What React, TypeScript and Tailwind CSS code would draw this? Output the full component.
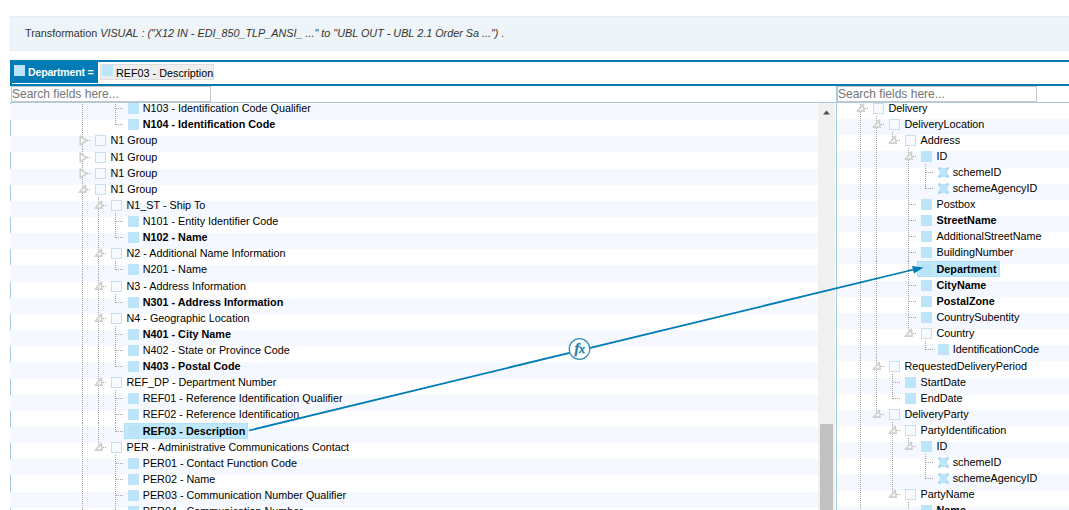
import React from "react";

type Kind = "box" | "leaf" | "attr";
type Joint = "closed" | "open" | "openLast" | "tee" | "end";

interface Row {
  text: string;
  level: number;
  kind: Kind;
  joint: Joint;
  guides?: number[];
  bold?: boolean;
  gap?: boolean;
  selected?: boolean;
}

const sourceRows: Row[] = [
  { text: "N103 - Identification Code Qualifier", level: 2, kind: "leaf", joint: "tee", guides: [0] },
  { text: "N104 - Identification Code", level: 2, kind: "leaf", joint: "end", guides: [0], bold: true },
  { text: "N1 Group", level: 0, kind: "box", joint: "closed" },
  { text: "N1 Group", level: 0, kind: "box", joint: "closed", gap: true },
  { text: "N1 Group", level: 0, kind: "box", joint: "closed" },
  { text: "N1 Group", level: 0, kind: "box", joint: "open" },
  { text: "N1_ST - Ship To", level: 1, kind: "box", joint: "open", guides: [0] },
  { text: "N101 - Entity Identifier Code", level: 2, kind: "leaf", joint: "tee", guides: [0, 1] },
  { text: "N102 - Name", level: 2, kind: "leaf", joint: "end", guides: [0, 1], bold: true },
  { text: "N2 - Additional Name Information", level: 1, kind: "box", joint: "open", guides: [0] },
  { text: "N201 - Name", level: 2, kind: "leaf", joint: "end", guides: [0, 1] },
  { text: "N3 - Address Information", level: 1, kind: "box", joint: "open", guides: [0], gap: true },
  { text: "N301 - Address Information", level: 2, kind: "leaf", joint: "end", guides: [0, 1], bold: true },
  { text: "N4 - Geographic Location", level: 1, kind: "box", joint: "open", guides: [0] },
  { text: "N401 - City Name", level: 2, kind: "leaf", joint: "tee", guides: [0, 1], bold: true },
  { text: "N402 - State or Province Code", level: 2, kind: "leaf", joint: "tee", guides: [0, 1] },
  { text: "N403 - Postal Code", level: 2, kind: "leaf", joint: "end", guides: [0, 1], bold: true },
  { text: "REF_DP - Department Number", level: 1, kind: "box", joint: "open", guides: [0] },
  { text: "REF01 - Reference Identification Qualifier", level: 2, kind: "leaf", joint: "tee", guides: [0, 1] },
  { text: "REF02 - Reference Identification", level: 2, kind: "leaf", joint: "tee", guides: [0, 1] },
  { text: "REF03 - Description", level: 2, kind: "leaf", joint: "end", guides: [0, 1], bold: true, gap: true, selected: true },
  { text: "PER - Administrative Communications Contact", level: 1, kind: "box", joint: "openLast", guides: [0] },
  { text: "PER01 - Contact Function Code", level: 2, kind: "leaf", joint: "tee", guides: [0] },
  { text: "PER02 - Name", level: 2, kind: "leaf", joint: "tee", guides: [0] },
  { text: "PER03 - Communication Number Qualifier", level: 2, kind: "leaf", joint: "tee", guides: [0] },
  { text: "PER04 - Communication Number", level: 2, kind: "leaf", joint: "tee", guides: [0] },
];

const targetRows: Row[] = [
  { text: "Delivery", level: 0, kind: "box", joint: "open" },
  { text: "DeliveryLocation", level: 1, kind: "box", joint: "open", guides: [0] },
  { text: "Address", level: 2, kind: "box", joint: "openLast", guides: [0, 1] },
  { text: "ID", level: 3, kind: "leaf", joint: "open", guides: [0, 1] },
  { text: "schemeID", level: 4, kind: "attr", joint: "tee", guides: [0, 1, 3] },
  { text: "schemeAgencyID", level: 4, kind: "attr", joint: "end", guides: [0, 1, 3] },
  { text: "Postbox", level: 3, kind: "leaf", joint: "tee", guides: [0, 1] },
  { text: "StreetName", level: 3, kind: "leaf", joint: "tee", guides: [0, 1], bold: true },
  { text: "AdditionalStreetName", level: 3, kind: "leaf", joint: "tee", guides: [0, 1] },
  { text: "BuildingNumber", level: 3, kind: "leaf", joint: "tee", guides: [0, 1] },
  { text: "Department", level: 3, kind: "leaf", joint: "tee", guides: [0, 1], bold: true, gap: true, selected: true },
  { text: "CityName", level: 3, kind: "leaf", joint: "tee", guides: [0, 1], bold: true },
  { text: "PostalZone", level: 3, kind: "leaf", joint: "tee", guides: [0, 1], bold: true },
  { text: "CountrySubentity", level: 3, kind: "leaf", joint: "tee", guides: [0, 1] },
  { text: "Country", level: 3, kind: "box", joint: "openLast", guides: [0, 1] },
  { text: "IdentificationCode", level: 4, kind: "leaf", joint: "end", guides: [0, 1] },
  { text: "RequestedDeliveryPeriod", level: 1, kind: "box", joint: "open", guides: [0], gap: true },
  { text: "StartDate", level: 2, kind: "leaf", joint: "tee", guides: [0, 1] },
  { text: "EndDate", level: 2, kind: "leaf", joint: "end", guides: [0, 1] },
  { text: "DeliveryParty", level: 1, kind: "box", joint: "openLast", guides: [0] },
  { text: "PartyIdentification", level: 2, kind: "box", joint: "open", guides: [0] },
  { text: "ID", level: 3, kind: "leaf", joint: "openLast", guides: [0, 2] },
  { text: "schemeID", level: 4, kind: "attr", joint: "tee", guides: [0, 2] },
  { text: "schemeAgencyID", level: 4, kind: "attr", joint: "end", guides: [0, 2] },
  { text: "PartyName", level: 2, kind: "box", joint: "openLast", guides: [0] },
  { text: "Name", level: 3, kind: "leaf", joint: "tee", guides: [0], bold: true },
];

function Guide({ y2 = 17 }: { y2?: number }) {
  return <path d={`M3.5 0V${y2}`} stroke="#a3a3a3" strokeDasharray="1 1" />;
}

function Cell({ joint, guide }: { joint?: Joint; guide?: boolean }) {
  return (
    <svg className="h-[17px] w-4 shrink-0 overflow-visible" viewBox="0 0 16 17" fill="none">
      {guide && <Guide />}
      {joint && (
        <>
          <Guide y2={joint === "end" || joint === "openLast" ? 9 : 17} />
          <path d="M4 8.5H11" stroke="#a3a3a3" strokeDasharray="1 1" />
        </>
      )}
      {joint === "closed" && (
        <path d="M1.2 4V13L7.5 8.5Z" fill="#fafafa" stroke="#d0d0d0" strokeWidth="1.6" strokeLinejoin="round" />
      )}
      {(joint === "open" || joint === "openLast") && (
        <path d="M0.3 11.2L6.2 4.2L7.2 11.2Z" fill="#f6f6f6" stroke="#d0d0d0" strokeWidth="1.7" strokeLinejoin="round" />
      )}
    </svg>
  );
}

function Marker({ kind, selected }: { kind: Kind; selected?: boolean }) {
  if (kind === "box") return <span className="size-[11px] shrink-0 border border-[#c9dfee] bg-[#f7fbff]" />;
  if (kind === "attr")
    return (
      <svg className="size-[11px] shrink-0" viewBox="0 0 11 11" fill="#bde5f9">
        <path d="M1 1H10L9.4 5.5L10 10H1L1.6 5.5Z" />
        <g fill="#a9d9f0">
          <circle cx="1.6" cy="1.6" r="1.6" />
          <circle cx="9.4" cy="1.6" r="1.6" />
          <circle cx="1.6" cy="9.4" r="1.6" />
          <circle cx="9.4" cy="9.4" r="1.6" />
        </g>
      </svg>
    );
  return <span className={`size-[11px] shrink-0 ${selected ? "bg-[#bae3f8]" : "bg-[#bde5f9]"}`} />;
}

function TreeRow({ row, deepLevel }: { row: Row; deepLevel: number }) {
  const cells = Array.from({ length: row.level + 1 }, (_, i) => i);
  return (
    <div className={`flex h-4 shrink-0 items-start ${row.gap ? "mt-px" : ""}`}>
      {cells.map((i) => (
        <span key={i} className={`flex shrink-0 ${i === deepLevel ? "pl-px" : ""}`}>
          <Cell guide={row.guides?.includes(i)} joint={i === row.level ? row.joint : undefined} />
        </span>
      ))}
      <span
        className={`-ml-1 flex h-4 items-center whitespace-nowrap pr-[3px] pl-1 ${
          row.selected ? "bg-[#bee8fe] outline outline-1 -outline-offset-1 outline-[#b2e0f7]" : ""
        }`}
      >
        <Marker kind={row.kind} selected={row.selected} />
        <span
          className={`leading-4 ${row.level === deepLevel ? "pl-[3.7px]" : "pl-[4.5px]"} ${row.bold ? "font-bold" : ""}`}
        >
          {row.text}
        </span>
      </span>
    </div>
  );
}

function SearchBox() {
  return (
    <input
      placeholder="Search fields here..."
      className="block h-4 w-[200px] border border-[#c6c6c6] bg-white px-0 text-[12px] leading-none outline-none placeholder:text-[#757575]"
    />
  );
}

export default function App() {
  return (
    <div className="relative flex h-[510px] w-[1069px] flex-col overflow-hidden bg-white pl-[10px] font-['Liberation_Sans',Arial,sans-serif] text-[10.8px] text-black">
      <div className="mt-4 flex h-[35px] shrink-0 items-center border border-r-0 border-[#e0eef8] bg-[#edf5f9] pl-[14px] text-[#333]">
        <span>
          Transformation <i>VISUAL : ("X12 IN - EDI_850_TLP_ANSI_ ..." to "UBL OUT - UBL 2.1 Order Sa ...") .</i>
        </span>
      </div>

      <div className="mt-[9px] flex h-[26px] shrink-0 items-start border-y-2 border-l-2 border-[#007bb5]">
        <div className="flex h-[21px] w-[86px] items-start bg-[#007bb5] pl-[2px] font-bold text-white">
          <span className="mt-[3px] size-[11px] shrink-0 bg-[#bde5f9]" />
          <span className="pl-[3px] text-[10.6px] leading-5 tracking-[-0.2px] whitespace-nowrap">Department =</span>
        </div>
        <div className="mt-[2px] ml-[2px] flex h-4 items-start border border-[#ddd] bg-[#eee] pl-px">
          <span className="size-[11px] bg-[#bde5f9]" />
          <span className="pt-px pl-[3px] leading-[15px]">REF03 - Description</span>
        </div>
      </div>

      <div className="flex min-h-0 flex-1">
        <section className="flex w-[826px] shrink-0 flex-col">
          <div className="h-[17px] shrink-0 border-b border-[#a6cbe3] pl-px">
            <SearchBox />
          </div>
          <div className="flex min-h-0 flex-1">
            <div className="w-px bg-[repeating-linear-gradient(to_bottom,#f5f9ff_0px,#f5f9ff_16.15px,#a6cbe3_16.15px,#a6cbe3_32.3px)] bg-[position:0_1px]" />
            <div className="flex w-[807px] flex-col overflow-hidden bg-[repeating-linear-gradient(to_bottom,#f5f9ff_0px,#f5f9ff_16.15px,#fff_16.15px,#fff_32.3px)] bg-[position:0_1px] pl-[68px]">
              <div className="-mt-[3px] flex flex-col">
                {sourceRows.map((row, i) => (
                  <TreeRow key={i} row={row} deepLevel={2} />
                ))}
              </div>
            </div>
            <div className="flex w-[17px] flex-col items-center bg-[#f0f0f0]">
              <svg className="mt-[7px] h-[5px] w-[7px] shrink-0" viewBox="0 0 7 5">
                <path d="M0 4.5L3.5 0.5L7 4.5Z" fill="#505050" />
              </svg>
              <div className="mt-[309px] w-[13px] flex-1 bg-[#c1c1c1]" />
            </div>
          </div>
        </section>

        <section className="flex min-w-0 flex-1 flex-col border-l border-[#a6cbe3]">
          <div className="h-[17px] shrink-0 border-b border-[#a6cbe3]">
            <SearchBox />
          </div>
          <div className="flex min-h-0 flex-1 flex-col overflow-hidden bg-[repeating-linear-gradient(to_bottom,#fff_0px,#fff_16.15px,#f5f9ff_16.15px,#f5f9ff_32.3px)] pl-[20px]">
            <div className="-mt-[3px] flex flex-col">
              {targetRows.map((row, i) => (
                <TreeRow key={i} row={row} deepLevel={4} />
              ))}
            </div>
          </div>
        </section>
      </div>

      <svg className="pointer-events-none absolute inset-0 h-[510px] w-[1069px]" viewBox="0 0 1069 510" fill="none">
        <path d="M249 430.5L914 269.5" stroke="#007bb5" strokeWidth="1.8" />
        <path d="M923.5 267.5L912 266L914 273.5Z" fill="#007bb5" />
        <circle cx="579.5" cy="349" r="10.3" fill="#fff" stroke="#3390b8" strokeWidth="1.2" />
        <g fill="#267fab" stroke="#267fab" strokeWidth="0.3" className="font-['Liberation_Serif',serif] font-bold italic">
          <text x="574.5" y="353" className="text-[14.5px]">
            f
          </text>
          <text x="579" y="353" className="text-[12px]">
            x
          </text>
        </g>
      </svg>
    </div>
  );
}
